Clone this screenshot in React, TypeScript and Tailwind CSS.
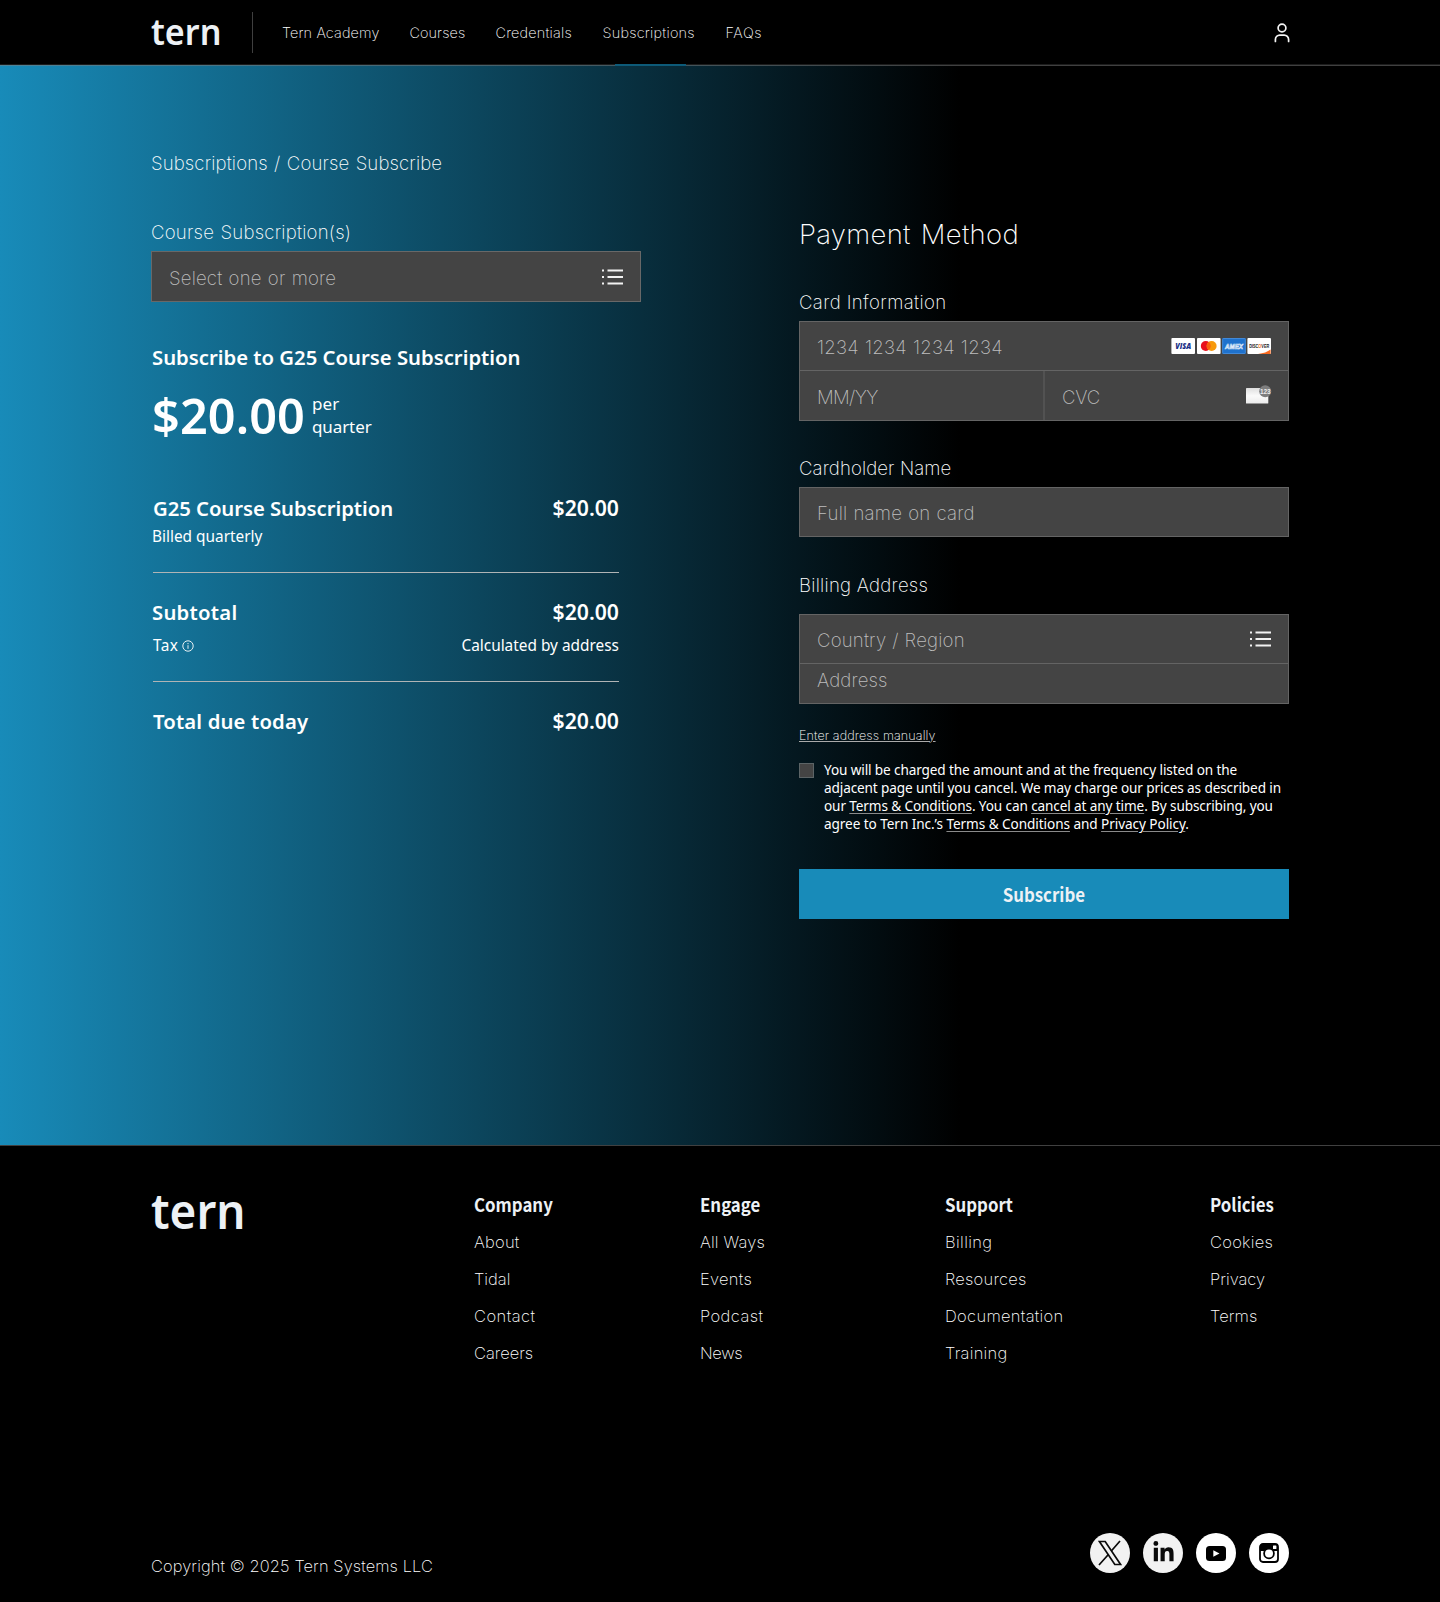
import type { ReactNode } from "react";
import { FaLinkedinIn } from "react-icons/fa";

const light = "whitespace-nowrap font-['Inter',sans-serif] font-extralight";
const body = "whitespace-nowrap font-['Noto_Sans',sans-serif]";
const strong = "inline-block scale-x-[0.915] whitespace-nowrap font-['Noto_Sans_CJK_SC',sans-serif] text-[18.4px] font-bold text-[#edf1f5]";
const label = `${light} text-[18.6px] leading-6 text-white`;
const hint = `${light} text-[18.6px] leading-6 text-[#bebebe]`;
const bold = `${body} font-semibold text-[20.3px] leading-7`;
const price = `${body} font-semibold text-[21.2px] leading-7`;
const small = `${body} text-[15.4px] leading-6`;
const link = "underline decoration-[#8a8a8a] decoration-1 underline-offset-[2px]";

function ListIcon() {
  return (
    <svg width="21" height="16" viewBox="0 0 21 16" className="shrink-0" stroke="#f2f2f2" strokeWidth="2.1">
      <path d="M0 1.5h2M0 8h2M0 14.5h2M5.5 1.5H21M5.5 8H21M5.5 14.5H21" />
    </svg>
  );
}

function UserIcon() {
  return (
    <svg width="16" height="20" viewBox="0 0 16 20" className="mt-px" fill="none" stroke="#f4f4f4" strokeWidth="1.7" strokeLinecap="round">
      <circle cx="8" cy="5" r="3.9" />
      <path d="M1.4 18.4v-1.9a4.4 4.4 0 0 1 4.4-4.4h4.4a4.4 4.4 0 0 1 4.4 4.4v1.9" />
    </svg>
  );
}

function CardBrands() {
  return (
    <svg width="100" height="16" viewBox="0 0 100 16" className="shrink-0">
      <rect x="0.4" width="23.6" height="16" rx="1" fill="#fff" />
      <text x="12.2" y="11" textAnchor="middle" fontFamily="Open Sans" fontWeight="800" fontStyle="italic" fontSize="8" textLength="16" lengthAdjust="spacingAndGlyphs" fill="#1a2f86">VISA</text>
      <rect x="26" width="23.6" height="16" rx="1" fill="#fff" />
      <circle cx="34.8" cy="8" r="5" fill="#e8101c" />
      <circle cx="40.6" cy="8" r="5" fill="#f79a0c" />
      <path d="M37.7 4a5 5 0 0 1 0 8a5 5 0 0 1 0-8z" fill="#f9600f" />
      <rect x="51.2" width="23.6" height="16" rx="1" fill="#1f72cd" />
      <rect x="51.7" y="0.5" width="22.6" height="15" rx="0.8" fill="none" stroke="#4b8fdb" strokeWidth="0.8" />
      <text x="63" y="10.6" textAnchor="middle" fontFamily="Liberation Sans" fontWeight="700" fontStyle="italic" fontSize="7" textLength="18" lengthAdjust="spacingAndGlyphs" fill="#1f72cd" stroke="#dbe8f7" strokeWidth="0.7">AMEX</text>
      <rect x="76.4" width="23.6" height="16" rx="1" fill="#fff" />
      <path d="M87 16Q95 15 99.6 11.5V16z" fill="#f96a20" />
      <text x="88.2" y="9.7" textAnchor="middle" fontFamily="Liberation Sans" fontWeight="700" fontSize="5" textLength="20" lengthAdjust="spacingAndGlyphs" fill="#222">DISC<tspan fill="#f96a20">O</tspan>VER</text>
    </svg>
  );
}

function CvcIcon() {
  return (
    <svg width="26" height="20" viewBox="0 0 26 20" className="mb-px shrink-0">
      <defs>
        <linearGradient id="card" x1="0" y1="0" x2="0" y2="1">
          <stop offset="0" stopColor="#dedede" />
          <stop offset="0.5" stopColor="#fafafa" />
          <stop offset="1" stopColor="#ececec" />
        </linearGradient>
      </defs>
      <rect x="0" y="3" width="22.3" height="15.5" rx="0.6" fill="url(#card)" />
      <circle cx="19.2" cy="6.2" r="6" fill="#7e7e7e" />
      <text x="19.3" y="8.6" textAnchor="middle" fontFamily="Liberation Sans" fontWeight="700" fontSize="6.8" textLength="10.8" lengthAdjust="spacingAndGlyphs" fill="#ececec">123</text>
    </svg>
  );
}

function InfoIcon() {
  return (
    <svg width="12" height="12" viewBox="0 0 12 12" fill="none" stroke="#e8f0f3" strokeWidth="1">
      <circle cx="6" cy="6" r="5.2" />
      <path d="M6 5.2v3.6M6 3v1.2" />
    </svg>
  );
}

function Social({ className, children }: { className: string; children: ReactNode }) {
  return <a className={`flex h-10 w-10 items-center justify-center rounded-full ${className}`}>{children}</a>;
}

const nav = [
  { t: "Tern Academy", c: "w-[127.5px] tracking-[0.15px]" },
  { t: "Courses", c: "w-[86px] tracking-[0.1px]" },
  { t: "Credentials", c: "w-[107px] tracking-[0.22px]" },
  { t: "Subscriptions", c: "w-[123px] tracking-[0.25px]" },
  { t: "FAQs", c: "tracking-[0.6px]" },
];

const footer: { h: string; c: string; l: [string, string][] }[] = [
  { h: "Company", c: "w-[226px]", l: [["About", "tracking-[0.23px]"], ["Tidal", ""], ["Contact", "tracking-[0.45px]"], ["Careers", ""]] },
  { h: "Engage", c: "w-[245px]", l: [["All Ways", "tracking-[0.17px]"], ["Events", "tracking-[0.29px]"], ["Podcast", "tracking-[0.43px]"], ["News", "tracking-[-0.35px]"]] },
  { h: "Support", c: "w-[265px]", l: [["Billing", "tracking-[0.37px]"], ["Resources", "tracking-[0.22px]"], ["Documentation", "tracking-[0.3px]"], ["Training", "tracking-[0.26px]"]] },
  { h: "Policies", c: "", l: [["Cookies", "tracking-[0.25px]"], ["Privacy", ""], ["Terms", "tracking-[0.1px]"]] },
];

export default function App() {
  return (
    <div className="w-[1440px] bg-black text-white">
      <header className="relative flex h-[65px] items-center border-b border-[#1c1c1c] pr-[150px] pl-[151px]">
        <div className="flex h-full w-[101px] items-center pb-[2px]">
          <span className={`${body} origin-left scale-x-[0.935] text-[36.5px] leading-none font-semibold text-[#edf1f5]`}>tern</span>
        </div>
        <div className="h-[41px] w-px bg-[#3f3f3f]" />
        <nav className={`${light} flex flex-1 pt-[2px] pl-[29px] text-[14.4px] leading-5 text-white`}>
          {nav.map((n) => (
            <a key={n.t} className={n.c}>{n.t}</a>
          ))}
        </nav>
        <UserIcon />
        <div className="absolute top-[64px] left-[615px] z-10 h-[2px] w-[71px] bg-[#0d5a78]" />
      </header>

      <main className="h-[1080px] border-t border-[#808080]/50 bg-[linear-gradient(90deg,#188bb9_0px,#000_960px)] px-[151px] pt-[85px]">
        <div className={`${label} h-6 tracking-[0.13px] [word-spacing:1px]`}>Subscriptions / Course Subscribe</div>
        <div className="flex gap-[158px]">
          <section className="w-[490px]">
            <div className={`${label} mt-[45px] h-6 tracking-[0.22px] [word-spacing:1px]`}>Course Subscription(s)</div>
            <div className="mt-[7px] flex h-[51px] items-center justify-between border border-[#808080]/60 bg-[#444] px-[17px]">
              <span className={`${hint} pt-[3px] tracking-[0.18px] [word-spacing:0.8px]`}>Select one or more</span>
              <ListIcon />
            </div>
            <div className="w-[468px] pl-[1px]">
              <h2 className={`${bold} mt-[41px] h-7`}>Subscribe to G25 Course Subscription</h2>
              <div className="mt-5 flex h-12">
                <span className={`${body} w-[160px] text-[48.6px] leading-[48px] font-semibold tracking-[0.1px]`}>$20.00</span>
                <div className={`${body} mt-px flex flex-col text-[17px] leading-[23px]`}>
                  <span className="tracking-[0.1px]">per</span>
                  <span className="tracking-[-0.1px]">quarter</span>
                </div>
              </div>
              <div className="mt-[55px] flex h-7 justify-between pl-px"><span className={`${bold} tracking-[-0.05px]`}>G25 Course Subscription</span><span className={price}>$20.00</span></div>
              <div className={`${small} mt-[3px] h-6`}>Billed quarterly</div>
              <div className="mt-[23px] ml-px h-px bg-[#b0b4b5]" />
              <div className="mt-[25px] flex h-7 justify-between"><span className={`${bold} tracking-[0.26px]`}>Subtotal</span><span className={price}>$20.00</span></div>
              <div className="mt-[8px] flex h-6 justify-between">
                <div className="flex items-center gap-[4px] pl-px"><span className={`${small} tracking-[0.4px]`}>Tax</span><InfoIcon /></div>
                <span className={small}>Calculated by address</span>
              </div>
              <div className="mt-[23px] ml-px h-px bg-[#b0b4b5]" />
              <div className="mt-[25px] flex h-7 justify-between pl-px"><span className={`${bold} tracking-[0.15px]`}>Total due today</span><span className={price}>$20.00</span></div>
            </div>
          </section>

          <section className="w-[490px]">
            <h1 className={`${light} mt-[41px] h-9 text-[27.5px] leading-9 tracking-[0.3px] text-white [word-spacing:2px]`}>Payment Method</h1>
            <div className={`${label} mt-[38px] h-6 tracking-[0.38px]`}>Card Information</div>
            <div className="mt-[7px] h-[100px] border border-[#646464] bg-[#444]">
              <div className="flex h-12 items-center justify-between px-[17px]">
                <span className={`${hint} pt-[2px] tracking-[0.25px] [word-spacing:0.5px]`}>1234 1234 1234 1234</span>
                <CardBrands />
              </div>
              <div className="flex h-[50px] border-t border-[#646464]">
                <div className="flex flex-1 items-center border-r-2 border-[#525252] pt-[2px] pl-[17px]"><span className={`${hint} tracking-[-0.65px]`}>MM/YY</span></div>
                <div className="flex w-[243px] items-center justify-between pr-[16px] pl-[17px]"><span className={`${hint} pt-[2px] tracking-[-0.15px]`}>CVC</span><CvcIcon /></div>
              </div>
            </div>
            <div className={`${label} mt-[35px] h-6 tracking-[0.1px]`}>Cardholder Name</div>
            <div className="mt-[7px] flex h-[50px] items-center border border-[#646464] bg-[#444] pt-[2px] pl-[17px]">
              <span className={`${hint} tracking-[0.24px] [word-spacing:0.5px]`}>Full name on card</span>
            </div>
            <div className={`${label} mt-[36px] h-6 tracking-[0.25px]`}>Billing Address</div>
            <div className="mt-[17px] h-[90px] border border-[#646464] bg-[#444]">
              <div className="flex h-12 items-center justify-between px-[17px]">
                <span className={`${hint} pt-[2px] tracking-[0.18px] [word-spacing:0.5px]`}>Country / Region</span>
                <ListIcon />
              </div>
              <div className="flex h-10 items-center border-t border-[#646464] pb-[7px] pl-[17px]"><span className={`${hint} tracking-[0.14px]`}>Address</span></div>
            </div>
            <div className={`${light} mt-[22px] h-5 text-[12.6px] leading-5 tracking-[0.1px] text-white underline decoration-[#aaa] underline-offset-[1px]`}>Enter address manually</div>
            <div className="mt-[15px] flex gap-[10px]">
              <div className="mt-[2px] h-[15px] w-[15px] border border-[#5c6466] bg-[#444]" />
              <p className={`${body} text-[13.6px] leading-[18px] tracking-[-0.12px]`}>
                You will be charged the amount and at the frequency listed on the<br />
                adjacent page until you cancel. We may charge our prices as described in<br />
                our <a className={link}>Terms &amp; Conditions</a>. You can <a className={link}>cancel at any time</a>. By subscribing, you<br />
                <span className="tracking-[-0.07px]">agree to Tern Inc.’s <a className={link}>Terms &amp; Conditions</a> and <a className={link}>Privacy Policy</a>.</span>
              </p>
            </div>
            <button className="mt-[36px] flex h-[50px] w-full items-center justify-center bg-[#188bb9] pr-px">
              <span className={`${strong} leading-6`}>Subscribe</span>
            </button>
          </section>
        </div>
      </main>

      <footer className="flex h-[457px] flex-col justify-between border-t border-[#404040] px-[151px] pb-[29px]">
        <div className="flex pt-[44px]">
          <div className="-mt-[4px] w-[323px]">
            <span className={`${body} block origin-left scale-x-[0.935] text-[49px] leading-[48px] font-semibold text-[#edf1f5]`}>tern</span>
          </div>
          {footer.map((f) => (
            <div key={f.h} className={f.c}>
              <h3 className={`${strong} block h-7 origin-left leading-7`}>{f.h}</h3>
              <ul className={`${light} mt-3 flex flex-col gap-[13px] text-[16.5px] leading-6 text-white`}>
                {f.l.map(([t, c]) => <li key={t} className={c}>{t}</li>)}
              </ul>
            </div>
          ))}
        </div>
        <div className="flex items-end justify-between">
          <span className={`${light} mb-[-5px] text-[16.4px] leading-6 tracking-[0.12px] text-white`}>Copyright © 2025 Tern Systems LLC</span>
          <div className="flex gap-[13px]">
            <Social className="bg-[#f2f2f2]">
              <svg width="24" height="26" viewBox="0 0 24 26" fill="none" stroke="#0a0a0a" strokeWidth="1.7">
                <path d="M1.4 1.5h5.8L22.6 24.5h-5.8z" />
                <path d="M22 1L13.3 11M10.6 14.2L1 25" />
              </svg>
            </Social>
            <Social className="bg-[#f2f2f2]"><FaLinkedinIn size={23} color="#0a0a0a" className="-mt-[2px]" /></Social>
            <Social className="bg-white">
              <svg width="20" height="15" viewBox="0 0 20 15">
                <rect width="20" height="15" rx="3.5" fill="#000" />
                <path d="M7.3 4.2L13.5 7.5L7.3 10.8z" fill="#fff" />
              </svg>
            </Social>
            <Social className="bg-white">
              <svg width="20" height="20" viewBox="0 0 20 20" fill="none">
                <rect x="1" y="1" width="18" height="18" rx="3" stroke="#000" strokeWidth="1.8" />
                <path d="M1 4Q1 1 4 1H16Q19 1 19 4V8H14.2A5 5 0 0 0 5.8 8H1z" fill="#000" />
                <rect x="14" y="2.6" width="3.4" height="3.4" rx="0.5" fill="#fff" />
                <circle cx="10" cy="10.4" r="4.9" fill="#fff" stroke="#000" strokeWidth="1.8" />
              </svg>
            </Social>
          </div>
        </div>
      </footer>
    </div>
  );
}
